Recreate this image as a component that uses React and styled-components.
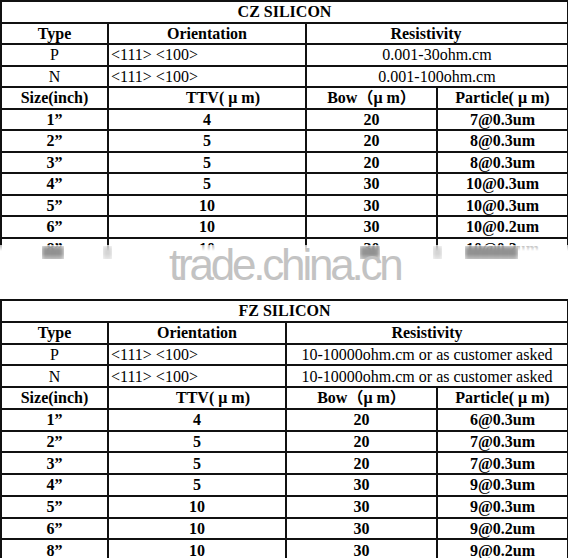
import React from 'react';
import styled, { createGlobalStyle } from 'styled-components';

const GlobalStyle = createGlobalStyle`
  html, body {
    margin: 0;
    padding: 0;
    background: #fff;
  }
  body {
    width: 568px;
    height: 558px;
    overflow: hidden;
    font-family: "Liberation Serif", "Noto Sans CJK SC", serif;
    color: #000;
  }
`;

const Page = styled.div`
  position: relative;
  width: 568px;
  height: 558px;
  overflow: hidden;
  display: flex;
  flex-direction: column;
`;

const Block = styled.section`
  position: relative;
  flex: none;
  height: ${(p) => p.$height}px;
  margin-top: ${(p) => p.$top || 0}px;
  overflow: hidden;
`;

const Table = styled.table`
  width: 567px;
  border-collapse: collapse;
  table-layout: fixed;
`;

const Row = styled.tr`
  height: ${(p) => p.$h}px;
`;

const Cell = styled.td`
  border: 2px solid #111;
  padding: 0 2px;
  padding-left: ${(p) => (p.$shift > 0 ? 2 + p.$shift : 2)}px;
  padding-right: ${(p) => (p.$shift < 0 ? 2 - p.$shift : 2)}px;
  font-size: 16px;
  line-height: 17px;
  font-weight: ${(p) => (p.$bold ? 700 : 400)};
  text-align: ${(p) => p.$align || 'center'};
  vertical-align: middle;
  white-space: nowrap;
  overflow: hidden;
`;

const Fade = styled.div`
  position: absolute;
  left: 0;
  right: 0;
  top: 245px;
  bottom: 0;
  background: linear-gradient(to bottom, rgba(255, 255, 255, 0.7), #fff 6px);
`;

const Smudge = styled.div`
  position: absolute;
  top: 246px;
  height: 20px;
  left: ${(p) => p.$x}px;
  width: ${(p) => p.$w}px;
  background: repeating-linear-gradient(
    to right,
    rgba(90, 90, 90, ${(p) => p.$o}),
    rgba(90, 90, 90, ${(p) => p.$o}) 3px,
    rgba(140, 140, 140, ${(p) => p.$o * 0.6}) 5px
  );
  filter: blur(2px);
  -webkit-mask-image: linear-gradient(to bottom, #000 40%, transparent);
  mask-image: linear-gradient(to bottom, #000 40%, transparent);
`;

const Watermark = styled.div`
  position: absolute;
  left: 169px;
  top: 240px;
  font-family: "Liberation Sans", Arial, sans-serif;
  font-size: 44px;
  letter-spacing: -3.2px;
  color: #c3c3c3;
  pointer-events: none;
  white-space: nowrap;
`;

const czRows = [
  ['1\u201D', '4', '20', '7@0.3um'],
  ['2\u201D', '5', '20', '8@0.3um'],
  ['3\u201D', '5', '20', '8@0.3um'],
  ['4\u201D', '5', '30', '10@0.3um'],
  ['5\u201D', '10', '30', '10@0.3um'],
  ['6\u201D', '10', '30', '10@0.2um'],
  ['8\u201D', '10', '30', '10@0.2um'],
];

const fzRows = [
  ['1\u201D', '4', '20', '6@0.3um'],
  ['2\u201D', '5', '20', '7@0.3um'],
  ['3\u201D', '5', '20', '7@0.3um'],
  ['4\u201D', '5', '30', '9@0.3um'],
  ['5\u201D', '10', '30', '9@0.3um'],
  ['6\u201D', '10', '30', '9@0.2um'],
  ['8\u201D', '10', '30', '9@0.2um'],
];

const SpecTable = ({ title, cols, resistivity, rows, resShift, rowH }) => (
  <Table>
    <colgroup>
      {cols.map((w, i) => (
        <col key={i} style={{ width: w }} />
      ))}
    </colgroup>
    <tbody>
      <Row $h={rowH}>
        <Cell colSpan={4} $bold>
          {title}
        </Cell>
      </Row>
      <Row $h={rowH}>
        <Cell $bold>Type</Cell>
        <Cell $bold>Orientation</Cell>
        <Cell colSpan={2} $bold $shift={resShift}>
          Resistivity
        </Cell>
      </Row>
      {['P', 'N'].map((t, i) => (
        <Row key={t} $h={rowH}>
          <Cell>{t}</Cell>
          <Cell $align="left">&lt;111&gt; &lt;100&gt;</Cell>
          <Cell colSpan={2}>{resistivity[i]}</Cell>
        </Row>
      ))}
      <Row $h={rowH}>
        <Cell $bold>Size(inch)</Cell>
        <Cell $bold $shift={32}>
          TTV( μ m)
        </Cell>
        <Cell $bold>Bow（μ m）</Cell>
        <Cell $bold>Particle( μ m)</Cell>
      </Row>
      {rows.map((r) => (
        <Row key={r[0]} $h={rowH}>
          {r.map((v, i) => (
            <Cell key={i} $bold>
              {v}
            </Cell>
          ))}
        </Row>
      ))}
    </tbody>
  </Table>
);

const smudges = [
  { x: 42, w: 22, o: 0.75 },
  { x: 103, w: 9, o: 0.3 },
  { x: 360, w: 20, o: 0.75 },
  { x: 433, w: 9, o: 0.3 },
  { x: 465, w: 53, o: 0.75 },
];

export default function App() {
  return (
    <Page>
      <GlobalStyle />
      <Block $height={259}>
        <SpecTable
          title="CZ SILICON"
          cols={[107, 198, 131, 131]}
          resistivity={['0.001-30ohm.cm', '0.001-100ohm.cm']}
          resShift={-22}
          rowH={21.5}
          rows={czRows}
        />
        <Fade />
        {smudges.map((s, i) => (
          <Smudge key={i} $x={s.x} $w={s.w} $o={s.o} />
        ))}
      </Block>
      <Block $height={260} $top={40}>
        <SpecTable
          title="FZ SILICON"
          cols={[107, 178, 151, 131]}
          resistivity={[
            '10-10000ohm.cm or as customer asked',
            '10-10000ohm.cm or as customer asked',
          ]}
          resShift={0}
          rowH={21.75}
          rows={fzRows}
        />
      </Block>
      <Watermark>trade.china.cn</Watermark>
    </Page>
  );
}
